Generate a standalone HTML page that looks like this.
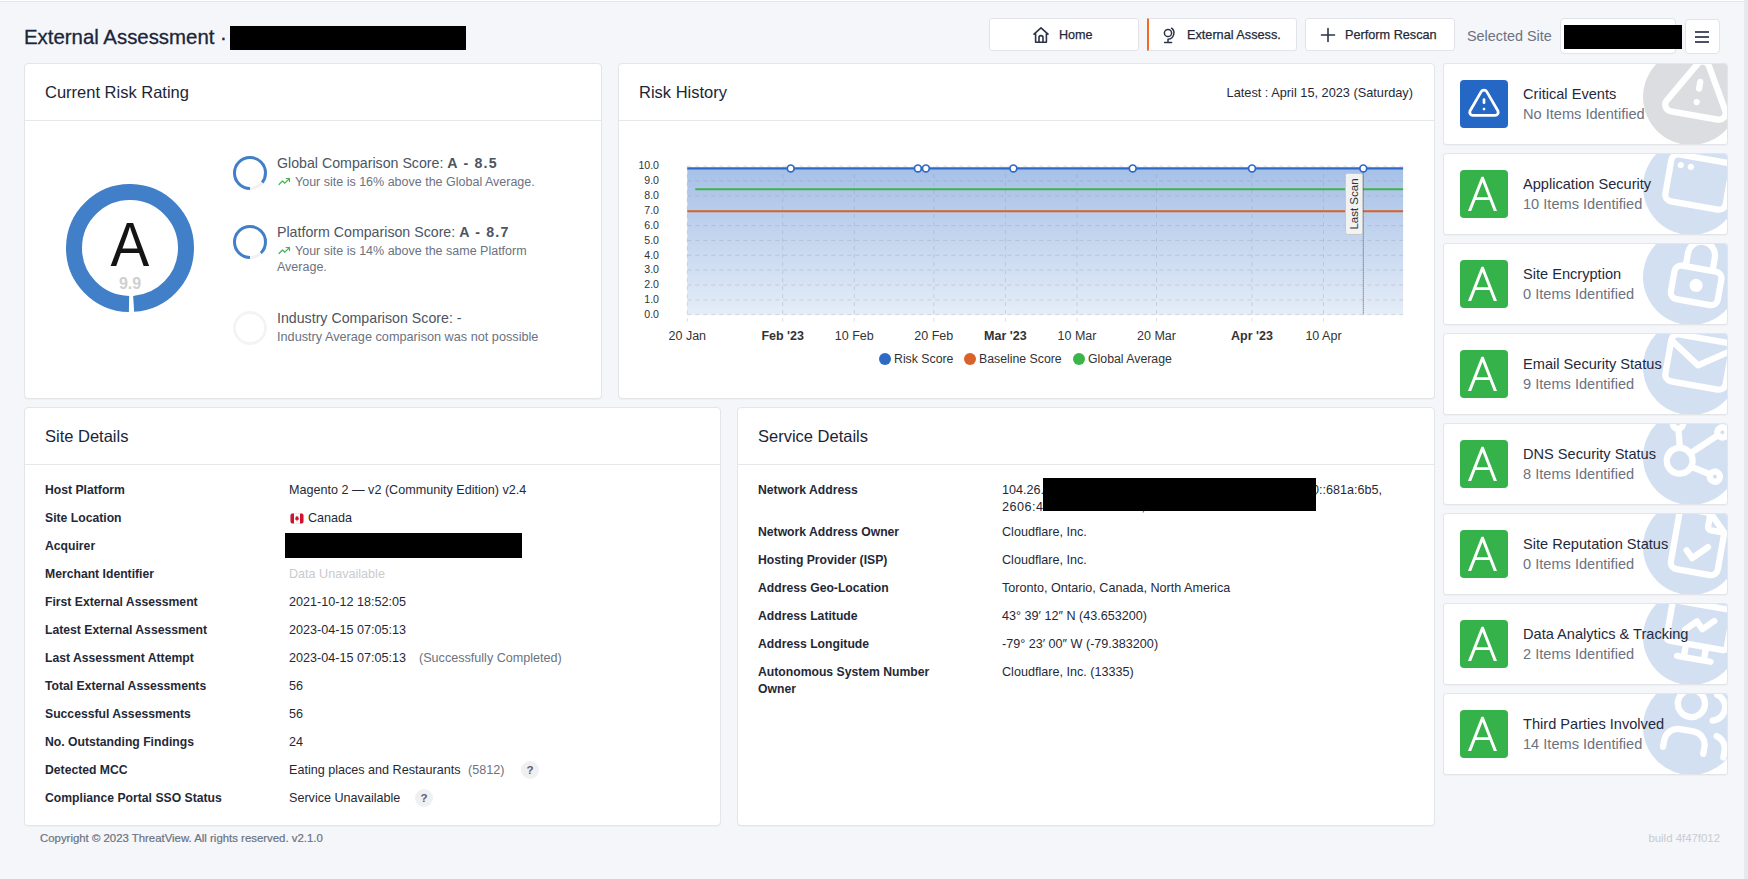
<!DOCTYPE html>
<html><head><meta charset="utf-8">
<style>
*{box-sizing:border-box;margin:0;padding:0}
html,body{width:1748px;height:879px;overflow:hidden}
body{-webkit-font-smoothing:antialiased;font-family:"Liberation Sans",sans-serif;background:#f4f6fa;position:relative;color:#1f2937}
.abs{position:absolute}
.topline{position:absolute;left:0;top:0;width:1744px;height:2px;background:#fff;border-bottom:1px solid #e3e5ea}
.scroll{position:absolute;right:0;top:0;width:4px;height:879px;background:#e8e9ee}
.title{position:absolute;left:24px;top:25px;font-size:20.4px;color:#1b2538;-webkit-text-stroke:0.3px #1b2538;white-space:nowrap;line-height:24px}
.redact{position:absolute;background:#000}
.btn{position:absolute;top:18px;height:33px;background:#fff;border:1px solid #e2e4ea;border-radius:3px;font-size:12.7px;color:#1f2937;white-space:nowrap}
.med{-webkit-text-stroke:0.25px currentColor}
.card{position:absolute;background:#fff;border:1px solid #e4e5e9;border-radius:4px;box-shadow:0 1px 1px rgba(0,0,0,0.03)}
.chead{position:absolute;left:0;top:0;right:0;height:57px;border-bottom:1px solid #e5e7eb}
.chead .t{position:absolute;left:20px;top:19px;font-size:16.5px;color:#1b2538;white-space:nowrap}
.rc{position:absolute;left:1443px;width:285px;height:82px;background:#fff;border:1px solid #e4e5e9;border-radius:3px;overflow:hidden;box-shadow:0 1px 1px rgba(0,0,0,0.03)}
.rc .bg{position:absolute;left:199px;top:-15px;width:96px;height:96px;border-radius:50%;background:#d3e0f2}
.rc svg.ic{position:absolute;left:199px;top:-15px}
.rc .sq{position:absolute;left:16px;top:16px;width:48px;height:48px;border-radius:4px;background:#36b24a}
.rc .t1{position:absolute;left:79px;top:22px;font-size:14.6px;color:#1f2a3c;white-space:nowrap;line-height:17px}
.rc .t2{position:absolute;left:79px;top:42px;font-size:14.6px;color:#6b7280;white-space:nowrap;line-height:17px}
.lb{position:absolute;font-size:12.2px;font-weight:700;color:#1f2937;white-space:nowrap;line-height:17px}
.vl{position:absolute;font-size:12.6px;color:#1f2937;white-space:nowrap;line-height:17px}
.q{position:absolute;width:18px;height:18px;border-radius:50%;background:#eff0f2;color:#5a6070;font-size:11.5px;font-weight:700;text-align:center;line-height:18px}
.small{position:absolute;white-space:nowrap}
</style></head><body>
<div class="topline"></div>
<div class="scroll"></div>
<div class="title">External Assessment ·</div>
<div class="redact" style="left:230px;top:26px;width:236px;height:24px"></div>

<div class="btn" style="left:989px;width:150px"></div>
<div class="btn" style="left:1147px;width:150px;border-left:2px solid #f26b21;border-top-left-radius:0;border-bottom-left-radius:0"></div>
<div class="btn" style="left:1305px;width:150px"></div>
<svg class="abs" style="left:1032px;top:26px" width="18" height="18" viewBox="0 0 18 18" fill="none" stroke="#2b3445" stroke-width="1.6" stroke-linejoin="round" stroke-linecap="round"><path d="M2 8.2 L9 1.8 L16 8.2 M3.6 6.8 V16.2 H14.4 V6.8 M7 16.2 V11.6 A2 2 0 0 1 11 11.6 V16.2"/></svg>
<div class="small med" style="left:1059px;top:28px;font-size:12.6px;color:#1f2937;line-height:14px">Home</div>
<svg class="abs" style="left:1161px;top:26px" width="16" height="18" viewBox="0 0 16 18" fill="none" stroke="#2b3445" stroke-width="1.5" stroke-linecap="round"><circle cx="7" cy="7" r="3.6"/><path d="M10.6 2.2 A6.2 6.2 0 0 1 7.2 13.2 M7 13.2 V16.4 M3.6 16.4 H10.6"/></svg>
<div class="small med" style="left:1187px;top:28px;font-size:12.7px;color:#1f2937;line-height:14px">External Assess.</div>
<svg class="abs" style="left:1320px;top:27px" width="16" height="16" viewBox="0 0 16 16" fill="none" stroke="#2b3445" stroke-width="1.6" stroke-linecap="round"><path d="M8 1.5 V14.5 M1.5 8 H14.5"/></svg>
<div class="small med" style="left:1345px;top:28px;font-size:12.7px;color:#1f2937;line-height:14px">Perform Rescan</div>
<div class="small" style="left:1467px;top:28px;font-size:14.4px;color:#6b7280;line-height:16px">Selected Site</div>
<div class="abs" style="left:1560px;top:18px;width:116px;height:36px;background:#fff;border:1px solid #dfe2e8;border-radius:4px"></div>
<div class="redact" style="left:1564px;top:25px;width:118px;height:24px"></div>
<div class="abs" style="left:1685px;top:19px;width:35px;height:35px;background:#fff;border:1px solid #e2e4ea;border-radius:4px"></div>
<div class="abs" style="left:1695px;top:31px;width:14px;height:2px;background:#4b5262"></div>
<div class="abs" style="left:1695px;top:36px;width:14px;height:2px;background:#4b5262"></div>
<div class="abs" style="left:1695px;top:41px;width:14px;height:2px;background:#4b5262"></div>

<div class="card" style="left:24px;top:63px;width:578px;height:336px"><div class="chead"><div class="t">Current Risk Rating</div></div></div>
<div class="card" style="left:618px;top:63px;width:817px;height:336px"><div class="chead"><div class="t">Risk History</div></div></div>
<div class="card" style="left:24px;top:407px;width:697px;height:419px"><div class="chead"><div class="t">Site Details</div></div></div>
<div class="card" style="left:737px;top:407px;width:698px;height:419px"><div class="chead"><div class="t">Service Details</div></div></div>


<svg class="abs" style="left:66px;top:184px" width="128" height="128" viewBox="0 0 128 128"><circle cx="64" cy="64" r="56" fill="none" stroke="#417fc8" stroke-width="16" stroke-dasharray="346.58 351.86" transform="rotate(91 64 64)"/></svg>
<div class="small" style="left:70px;top:209px;width:120px;text-align:center;font-size:62.5px;line-height:70px;color:#141414;transform:scaleX(0.93)">A</div>
<div class="small" style="left:70px;top:274.5px;width:120px;text-align:center;font-size:16px;line-height:18px;color:#cfcfcf;font-weight:700">9.9</div>
<svg class="abs" style="left:233px;top:156px" width="34" height="34" viewBox="0 0 34 34"><circle cx="17" cy="17" r="15.5" fill="none" stroke="#f1f1f1" stroke-width="3"/><circle cx="17" cy="17" r="15.5" fill="none" stroke="#417fc8" stroke-width="3" stroke-dasharray="82.78 97.39" transform="rotate(90 17 17)"/></svg>
<svg class="abs" style="left:233px;top:225px" width="34" height="34" viewBox="0 0 34 34"><circle cx="17" cy="17" r="15.5" fill="none" stroke="#f1f1f1" stroke-width="3"/><circle cx="17" cy="17" r="15.5" fill="none" stroke="#417fc8" stroke-width="3" stroke-dasharray="84.73 97.39" transform="rotate(90 17 17)"/></svg>
<svg class="abs" style="left:233px;top:311px" width="34" height="34" viewBox="0 0 34 34"><circle cx="17" cy="17" r="15.5" fill="none" stroke="#f4f4f4" stroke-width="3"/></svg>
<div class="small" style="left:277px;top:155px;font-size:14.2px;line-height:17px;color:#4b5563">Global Comparison Score: <b style="letter-spacing:1.2px;color:#4b5563">A - 8.5</b></div>
<svg class="abs" style="left:278px;top:177px" width="13" height="9" viewBox="0 0 13 9" fill="none" stroke="#45b553" stroke-width="1.2" stroke-linecap="round" stroke-linejoin="round"><path d="M1 7.5 L4.5 4 L6.8 6.2 L11.5 1.5 M8.2 1.5 H11.5 V4.6"/></svg>
<div class="small" style="left:295px;top:175px;font-size:12.5px;line-height:15px;color:#6b7280">Your site is 16% above the Global Average.</div>
<div class="small" style="left:277px;top:224px;font-size:14.2px;line-height:17px;color:#4b5563">Platform Comparison Score: <b style="letter-spacing:1.2px;color:#4b5563">A - 8.7</b></div>
<svg class="abs" style="left:278px;top:246px" width="13" height="9" viewBox="0 0 13 9" fill="none" stroke="#45b553" stroke-width="1.2" stroke-linecap="round" stroke-linejoin="round"><path d="M1 7.5 L4.5 4 L6.8 6.2 L11.5 1.5 M8.2 1.5 H11.5 V4.6"/></svg>
<div class="small" style="left:295px;top:244px;font-size:12.5px;line-height:15px;color:#6b7280">Your site is 14% above the same Platform</div>
<div class="small" style="left:277px;top:260px;font-size:12.5px;line-height:15px;color:#6b7280">Average.</div>
<div class="small" style="left:277px;top:310px;font-size:14.2px;line-height:17px;color:#4b5563">Industry Comparison Score: -</div>
<div class="small" style="left:277px;top:330px;font-size:12.7px;line-height:15px;color:#6b7280">Industry Average comparison was not possible</div>
<svg class="abs" style="left:618px;top:63px" width="817" height="335" viewBox="618 63 817 335" font-family="Liberation Sans, sans-serif"><defs><linearGradient id="gf" x1="0" y1="0" x2="0" y2="1"><stop offset="0" stop-color="#a6c0e7"/><stop offset="1" stop-color="#e5edf8"/></linearGradient></defs><rect x="687.3" y="168.3" width="715.8" height="146.4" fill="url(#gf)"/><line x1="687.3" y1="314.7" x2="1403.1" y2="314.7" stroke="#8f98a6" stroke-opacity="0.32" stroke-width="1" stroke-dasharray="4 4"/><text x="659" y="317.9" text-anchor="end" font-size="10.6" fill="#333">0.0</text><line x1="687.3" y1="299.9" x2="1403.1" y2="299.9" stroke="#8f98a6" stroke-opacity="0.32" stroke-width="1" stroke-dasharray="4 4"/><text x="659" y="303.1" text-anchor="end" font-size="10.6" fill="#333">1.0</text><line x1="687.3" y1="285.0" x2="1403.1" y2="285.0" stroke="#8f98a6" stroke-opacity="0.32" stroke-width="1" stroke-dasharray="4 4"/><text x="659" y="288.2" text-anchor="end" font-size="10.6" fill="#333">2.0</text><line x1="687.3" y1="270.1" x2="1403.1" y2="270.1" stroke="#8f98a6" stroke-opacity="0.32" stroke-width="1" stroke-dasharray="4 4"/><text x="659" y="273.3" text-anchor="end" font-size="10.6" fill="#333">3.0</text><line x1="687.3" y1="255.3" x2="1403.1" y2="255.3" stroke="#8f98a6" stroke-opacity="0.32" stroke-width="1" stroke-dasharray="4 4"/><text x="659" y="258.5" text-anchor="end" font-size="10.6" fill="#333">4.0</text><line x1="687.3" y1="240.4" x2="1403.1" y2="240.4" stroke="#8f98a6" stroke-opacity="0.32" stroke-width="1" stroke-dasharray="4 4"/><text x="659" y="243.6" text-anchor="end" font-size="10.6" fill="#333">5.0</text><line x1="687.3" y1="225.6" x2="1403.1" y2="225.6" stroke="#8f98a6" stroke-opacity="0.32" stroke-width="1" stroke-dasharray="4 4"/><text x="659" y="228.8" text-anchor="end" font-size="10.6" fill="#333">6.0</text><line x1="687.3" y1="210.8" x2="1403.1" y2="210.8" stroke="#8f98a6" stroke-opacity="0.32" stroke-width="1" stroke-dasharray="4 4"/><text x="659" y="213.9" text-anchor="end" font-size="10.6" fill="#333">7.0</text><line x1="687.3" y1="195.9" x2="1403.1" y2="195.9" stroke="#8f98a6" stroke-opacity="0.32" stroke-width="1" stroke-dasharray="4 4"/><text x="659" y="199.1" text-anchor="end" font-size="10.6" fill="#333">8.0</text><line x1="687.3" y1="181.0" x2="1403.1" y2="181.0" stroke="#8f98a6" stroke-opacity="0.32" stroke-width="1" stroke-dasharray="4 4"/><text x="659" y="184.2" text-anchor="end" font-size="10.6" fill="#333">9.0</text><line x1="687.3" y1="166.2" x2="1403.1" y2="166.2" stroke="#8f98a6" stroke-opacity="0.32" stroke-width="1" stroke-dasharray="4 4"/><text x="659" y="169.4" text-anchor="end" font-size="10.6" fill="#333">10.0</text><line x1="687.3" y1="166.2" x2="687.3" y2="321.5" stroke="#8f98a6" stroke-opacity="0.32" stroke-width="1" stroke-dasharray="4 4"/><text x="687.3" y="340.3" text-anchor="middle" font-size="12.5" fill="#333">20 Jan</text><line x1="782.7" y1="166.2" x2="782.7" y2="321.5" stroke="#8f98a6" stroke-opacity="0.32" stroke-width="1" stroke-dasharray="4 4"/><text x="782.7" y="340.3" text-anchor="middle" font-size="12.5" fill="#333" font-weight="700">Feb &#39;23</text><line x1="854.3" y1="166.2" x2="854.3" y2="321.5" stroke="#8f98a6" stroke-opacity="0.32" stroke-width="1" stroke-dasharray="4 4"/><text x="854.3" y="340.3" text-anchor="middle" font-size="12.5" fill="#333">10 Feb</text><line x1="933.8" y1="166.2" x2="933.8" y2="321.5" stroke="#8f98a6" stroke-opacity="0.32" stroke-width="1" stroke-dasharray="4 4"/><text x="933.8" y="340.3" text-anchor="middle" font-size="12.5" fill="#333">20 Feb</text><line x1="1005.4" y1="166.2" x2="1005.4" y2="321.5" stroke="#8f98a6" stroke-opacity="0.32" stroke-width="1" stroke-dasharray="4 4"/><text x="1005.4" y="340.3" text-anchor="middle" font-size="12.5" fill="#333" font-weight="700">Mar &#39;23</text><line x1="1077.0" y1="166.2" x2="1077.0" y2="321.5" stroke="#8f98a6" stroke-opacity="0.32" stroke-width="1" stroke-dasharray="4 4"/><text x="1077.0" y="340.3" text-anchor="middle" font-size="12.5" fill="#333">10 Mar</text><line x1="1156.5" y1="166.2" x2="1156.5" y2="321.5" stroke="#8f98a6" stroke-opacity="0.32" stroke-width="1" stroke-dasharray="4 4"/><text x="1156.5" y="340.3" text-anchor="middle" font-size="12.5" fill="#333">20 Mar</text><line x1="1252.0" y1="166.2" x2="1252.0" y2="321.5" stroke="#8f98a6" stroke-opacity="0.32" stroke-width="1" stroke-dasharray="4 4"/><text x="1252.0" y="340.3" text-anchor="middle" font-size="12.5" fill="#333" font-weight="700">Apr &#39;23</text><line x1="1323.5" y1="166.2" x2="1323.5" y2="321.5" stroke="#8f98a6" stroke-opacity="0.32" stroke-width="1" stroke-dasharray="4 4"/><text x="1323.5" y="340.3" text-anchor="middle" font-size="12.5" fill="#333">10 Apr</text><line x1="695.3" y1="189.2" x2="1403.1" y2="189.2" stroke="#3ab54a" stroke-width="2"/><line x1="687.3" y1="211.3" x2="1403.1" y2="211.3" stroke="#d9622b" stroke-width="2"/><line x1="687.3" y1="168.4" x2="1403.1" y2="168.4" stroke="#2d6ac6" stroke-width="2.2"/><line x1="1363.3" y1="168.4" x2="1363.3" y2="314.7" stroke="#555" stroke-width="1" stroke-dasharray="1 1"/><rect x="1345.5" y="173.5" width="17" height="61" rx="2" fill="#f2f2f2" stroke="#c8c8c8" stroke-width="1"/><text transform="translate(1358,204) rotate(-90)" text-anchor="middle" font-size="11.5" fill="#333">Last Scan</text><circle cx="790.7" cy="168.4" r="3.4" fill="#fff" stroke="#2d6ac6" stroke-width="1.7"/><circle cx="917.9" cy="168.4" r="3.4" fill="#fff" stroke="#2d6ac6" stroke-width="1.7"/><circle cx="925.9" cy="168.4" r="3.4" fill="#fff" stroke="#2d6ac6" stroke-width="1.7"/><circle cx="1013.4" cy="168.4" r="3.4" fill="#fff" stroke="#2d6ac6" stroke-width="1.7"/><circle cx="1132.7" cy="168.4" r="3.4" fill="#fff" stroke="#2d6ac6" stroke-width="1.7"/><circle cx="1252.0" cy="168.4" r="3.4" fill="#fff" stroke="#2d6ac6" stroke-width="1.7"/><circle cx="1363.3" cy="168.4" r="3.4" fill="#fff" stroke="#2d6ac6" stroke-width="1.7"/></svg>
<div class="abs" style="left:879px;top:353px;width:12px;height:12px;border-radius:50%;background:#2d6ac6"></div>
<div class="small" style="left:894px;top:352px;font-size:12.3px;line-height:15px;color:#333">Risk Score</div>
<div class="abs" style="left:964px;top:353px;width:12px;height:12px;border-radius:50%;background:#d9622b"></div>
<div class="small" style="left:979px;top:352px;font-size:12.3px;line-height:15px;color:#333">Baseline Score</div>
<div class="abs" style="left:1073px;top:353px;width:12px;height:12px;border-radius:50%;background:#3ab54a"></div>
<div class="small" style="left:1088px;top:352px;font-size:12.3px;line-height:15px;color:#333">Global Average</div>
<div class="small" style="left:1000px;top:85px;width:413px;text-align:right;font-size:12.75px;line-height:15px;color:#1f2937">Latest : April 15, 2023 (Saturday)</div>
<div class="rc" style="top:63px"><div class="bg" style="background:#dcdde1"></div><svg class="ic" width="96" height="96" viewBox="0 0 96 96"><g transform="translate(55.5,43) rotate(10) scale(3.4) translate(-12,-12)" fill="none" stroke="#fff" stroke-width="1.85" stroke-linecap="round" stroke-linejoin="round"><path d="M12 9v2m0 4v.01 M5 19h14a2 2 0 0 0 1.84 -2.75l-7.1 -12.25a2 2 0 0 0 -3.5 0l-7.1 12.25a2 2 0 0 0 1.75 2.75"/></g></svg><div class="sq" style="background:#2567c5"></div><svg class="abs" style="left:16px;top:16px" width="48" height="48" viewBox="0 0 48 48"><g transform="translate(24,24.3) scale(1.58) translate(-12,-12)" fill="none" stroke="#fff" stroke-width="1.75" stroke-linecap="round" stroke-linejoin="round"><path d="M12 9v2m0 4v.01 M5 19h14a2 2 0 0 0 1.84 -2.75l-7.1 -12.25a2 2 0 0 0 -3.5 0l-7.1 12.25a2 2 0 0 0 1.75 2.75"/></g></svg><div class="t1">Critical Events</div><div class="t2">No Items Identified</div></div>
<div class="rc" style="top:153px"><div class="bg" style="background:#d3e0f2"></div><svg class="ic" width="96" height="96" viewBox="0 0 96 96"><g transform="translate(55.5,43) rotate(10) scale(3.4) translate(-12,-12)" fill="none" stroke="#fff" stroke-width="1.85" stroke-linecap="round" stroke-linejoin="round"><path d="M3 7a2 2 0 0 1 2 -2h14a2 2 0 0 1 2 2v10a2 2 0 0 1 -2 2h-14a2 2 0 0 1 -2 -2z M6 8h.01 M9 8h.01"/></g></svg><div class="sq"></div><svg class="abs" style="left:16px;top:16px" width="48" height="48" viewBox="0 0 48 48"><path d="M8 41 L21.4 6.7 L23.6 6.7 L37 41 L33.8 41 L29.5 30 L15.5 30 L11.2 41 Z M16.55 27.3 L28.46 27.3 L22.5 12 Z" fill="#fff" fill-rule="evenodd"/></svg><div class="t1">Application Security</div><div class="t2">10 Items Identified</div></div>
<div class="rc" style="top:243px"><div class="bg" style="background:#d3e0f2"></div><svg class="ic" width="96" height="96" viewBox="0 0 96 96"><g transform="translate(55.5,43) rotate(10) scale(3.4) translate(-12,-12)" fill="none" stroke="#fff" stroke-width="1.85" stroke-linecap="round" stroke-linejoin="round"><path d="M5 13a2 2 0 0 1 2 -2h10a2 2 0 0 1 2 2v6a2 2 0 0 1 -2 2h-10a2 2 0 0 1 -2 -2z M11 16a1 1 0 1 0 2 0a1 1 0 1 0 -2 0 M8 11v-4a4 4 0 1 1 8 0v4"/></g></svg><div class="sq"></div><svg class="abs" style="left:16px;top:16px" width="48" height="48" viewBox="0 0 48 48"><path d="M8 41 L21.4 6.7 L23.6 6.7 L37 41 L33.8 41 L29.5 30 L15.5 30 L11.2 41 Z M16.55 27.3 L28.46 27.3 L22.5 12 Z" fill="#fff" fill-rule="evenodd"/></svg><div class="t1">Site Encryption</div><div class="t2">0 Items Identified</div></div>
<div class="rc" style="top:333px"><div class="bg" style="background:#d3e0f2"></div><svg class="ic" width="96" height="96" viewBox="0 0 96 96"><g transform="translate(55.5,43) rotate(10) scale(3.4) translate(-12,-12)" fill="none" stroke="#fff" stroke-width="1.85" stroke-linecap="round" stroke-linejoin="round"><path d="M3 7a2 2 0 0 1 2 -2h14a2 2 0 0 1 2 2v10a2 2 0 0 1 -2 2h-14a2 2 0 0 1 -2 -2z M3 7l9 6l9 -6"/></g></svg><div class="sq"></div><svg class="abs" style="left:16px;top:16px" width="48" height="48" viewBox="0 0 48 48"><path d="M8 41 L21.4 6.7 L23.6 6.7 L37 41 L33.8 41 L29.5 30 L15.5 30 L11.2 41 Z M16.55 27.3 L28.46 27.3 L22.5 12 Z" fill="#fff" fill-rule="evenodd"/></svg><div class="t1">Email Security Status</div><div class="t2">9 Items Identified</div></div>
<div class="rc" style="top:423px"><div class="bg" style="background:#d3e0f2"></div><svg class="ic" width="96" height="96" viewBox="0 0 96 96"><g transform="translate(55.5,43) rotate(10) scale(3.4) translate(-12,-12)" fill="none" stroke="#fff" stroke-width="1.85" stroke-linecap="round" stroke-linejoin="round"><path d="M3.2 15.5a3.8 3.8 0 1 0 7.6 0a3.8 3.8 0 1 0 -7.6 0 M3.1 4.85a1.5 1.5 0 1 0 3 0a1.5 1.5 0 1 0 -3 0 M16.4 5.1a1.5 1.5 0 1 0 3 0a1.5 1.5 0 1 0 -3 0 M16.5 18.3a1.5 1.5 0 1 0 3 0a1.5 1.5 0 1 0 -3 0 M6.4 11.7 L5 6.4 M9.6 12.9 L16.8 6.1 M10.6 16.6 L16.6 17.9"/></g></svg><div class="sq"></div><svg class="abs" style="left:16px;top:16px" width="48" height="48" viewBox="0 0 48 48"><path d="M8 41 L21.4 6.7 L23.6 6.7 L37 41 L33.8 41 L29.5 30 L15.5 30 L11.2 41 Z M16.55 27.3 L28.46 27.3 L22.5 12 Z" fill="#fff" fill-rule="evenodd"/></svg><div class="t1">DNS Security Status</div><div class="t2">8 Items Identified</div></div>
<div class="rc" style="top:513px"><div class="bg" style="background:#d3e0f2"></div><svg class="ic" width="96" height="96" viewBox="0 0 96 96"><g transform="translate(55.5,43) rotate(10) scale(3.4) translate(-12,-12)" fill="none" stroke="#fff" stroke-width="1.85" stroke-linecap="round" stroke-linejoin="round"><path d="M14 3v4a1 1 0 0 0 1 1h4 M17 21h-10a2 2 0 0 1 -2 -2v-14a2 2 0 0 1 2 -2h7l5 5v11a2 2 0 0 1 -2 2z M9 15l2 2l4 -4"/></g></svg><div class="sq"></div><svg class="abs" style="left:16px;top:16px" width="48" height="48" viewBox="0 0 48 48"><path d="M8 41 L21.4 6.7 L23.6 6.7 L37 41 L33.8 41 L29.5 30 L15.5 30 L11.2 41 Z M16.55 27.3 L28.46 27.3 L22.5 12 Z" fill="#fff" fill-rule="evenodd"/></svg><div class="t1">Site Reputation Status</div><div class="t2">0 Items Identified</div></div>
<div class="rc" style="top:603px"><div class="bg" style="background:#d3e0f2"></div><svg class="ic" width="96" height="96" viewBox="0 0 96 96"><g transform="translate(55.5,43) rotate(10) scale(3.4) translate(-12,-12)" fill="none" stroke="#fff" stroke-width="1.85" stroke-linecap="round" stroke-linejoin="round"><path d="M3 5a1 1 0 0 1 1 -1h16a1 1 0 0 1 1 1v10a1 1 0 0 1 -1 1h-16a1 1 0 0 1 -1 -1z M7 20h10 M9 16v4 M15 16v4 M8 12l3 -3l2 2l3 -3"/></g></svg><div class="sq"></div><svg class="abs" style="left:16px;top:16px" width="48" height="48" viewBox="0 0 48 48"><path d="M8 41 L21.4 6.7 L23.6 6.7 L37 41 L33.8 41 L29.5 30 L15.5 30 L11.2 41 Z M16.55 27.3 L28.46 27.3 L22.5 12 Z" fill="#fff" fill-rule="evenodd"/></svg><div class="t1">Data Analytics &amp; Tracking</div><div class="t2">2 Items Identified</div></div>
<div class="rc" style="top:693px"><div class="bg" style="background:#d3e0f2"></div><svg class="ic" width="96" height="96" viewBox="0 0 96 96"><g transform="translate(55.5,43) rotate(10) scale(3.4) translate(-12,-12)" fill="none" stroke="#fff" stroke-width="1.85" stroke-linecap="round" stroke-linejoin="round"><path d="M5 7a4 4 0 1 0 8 0a4 4 0 1 0 -8 0 M3 21v-2a4 4 0 0 1 4 -4h4a4 4 0 0 1 4 4v2 M16 3.13a4 4 0 0 1 0 7.75 M21 21v-2a4 4 0 0 0 -3 -3.85"/></g></svg><div class="sq"></div><svg class="abs" style="left:16px;top:16px" width="48" height="48" viewBox="0 0 48 48"><path d="M8 41 L21.4 6.7 L23.6 6.7 L37 41 L33.8 41 L29.5 30 L15.5 30 L11.2 41 Z M16.55 27.3 L28.46 27.3 L22.5 12 Z" fill="#fff" fill-rule="evenodd"/></svg><div class="t1">Third Parties Involved</div><div class="t2">14 Items Identified</div></div>
<div class="lb" style="left:45px;top:482px">Host Platform</div>
<div class="vl" style="left:289px;top:482px">Magento 2 — v2 (Community Edition) v2.4</div>
<div class="lb" style="left:45px;top:510px">Site Location</div>
<div class="lb" style="left:45px;top:538px">Acquirer</div>
<div class="lb" style="left:45px;top:566px">Merchant Identifier</div>
<div class="lb" style="left:45px;top:594px">First External Assessment</div>
<div class="vl" style="left:289px;top:594px">2021-10-12 18:52:05</div>
<div class="lb" style="left:45px;top:622px">Latest External Assessment</div>
<div class="vl" style="left:289px;top:622px">2023-04-15 07:05:13</div>
<div class="lb" style="left:45px;top:650px">Last Assessment Attempt</div>
<div class="lb" style="left:45px;top:678px">Total External Assessments</div>
<div class="vl" style="left:289px;top:678px">56</div>
<div class="lb" style="left:45px;top:706px">Successful Assessments</div>
<div class="vl" style="left:289px;top:706px">56</div>
<div class="lb" style="left:45px;top:734px">No. Outstanding Findings</div>
<div class="vl" style="left:289px;top:734px">24</div>
<div class="lb" style="left:45px;top:762px">Detected MCC</div>
<div class="lb" style="left:45px;top:790px">Compliance Portal SSO Status</div>
<svg class="abs" style="left:290px;top:513px" width="14" height="11" viewBox="0 0 14 11"><rect x="0.5" y="0.5" width="13" height="10" rx="2" fill="#fff" stroke="#e3e3e3" stroke-width="0.6"/><path d="M2.5 0.5 H4 V10.5 H2.5 A2 2 0 0 1 0.5 8.5 V2.5 A2 2 0 0 1 2.5 0.5 Z M10 0.5 H11.5 A2 2 0 0 1 13.5 2.5 V8.5 A2 2 0 0 1 11.5 10.5 H10 Z" fill="#d0122f"/><path d="M7 2.6 L7.6 3.8 L8.4 3.5 L8.1 5 L9 4.6 L8.6 5.8 L9.3 6.2 L7.4 6.9 V8.2 H6.6 V6.9 L4.7 6.2 L5.4 5.8 L5 4.6 L5.9 5 L5.6 3.5 L6.4 3.8 Z" fill="#d0122f"/></svg>
<div class="vl" style="left:308px;top:510px">Canada</div>
<div class="redact" style="left:285px;top:533px;width:237px;height:25px"></div>
<div class="vl" style="left:289px;top:566px;color:#c9cbcf">Data Unavailable</div>
<div class="vl" style="left:289px;top:650px">2023-04-15 07:05:13</div>
<div class="vl" style="left:419px;top:650px;color:#6b7280">(Successfully Completed)</div>
<div class="vl" style="left:289px;top:762px">Eating places and Restaurants</div>
<div class="vl" style="left:468px;top:762px;color:#6b7280">(5812)</div>
<div class="q" style="left:521px;top:761px">?</div>
<div class="vl" style="left:289px;top:790px">Service Unavailable</div>
<div class="q" style="left:415px;top:789px">?</div>
<div class="lb" style="left:758px;top:482px">Network Address</div>
<div class="lb" style="left:758px;top:524px">Network Address Owner</div>
<div class="lb" style="left:758px;top:552px">Hosting Provider (ISP)</div>
<div class="lb" style="left:758px;top:580px">Address Geo-Location</div>
<div class="lb" style="left:758px;top:608px">Address Latitude</div>
<div class="lb" style="left:758px;top:636px">Address Longitude</div>
<div class="lb" style="left:758px;top:664px">Autonomous System Number</div>
<div class="lb" style="left:758px;top:681px">Owner</div>
<div class="vl" style="left:1002px;top:482px">104.26.10.229, 172.67.71.145, 2606:4700:20::681a:6b5,</div>
<div class="vl" style="left:1002px;top:499px"><span style="letter-spacing:0.5px">2606:4</span>700:20::681a:ae5, 2606:4700:20::ac43:4791</div>
<div class="vl" style="left:1182px;top:482px;width:200px;text-align:right">0::681a:6b5,</div>
<div class="redact" style="left:1043px;top:478px;width:273px;height:33px"></div>
<div class="vl" style="left:1002px;top:524px">Cloudflare, Inc.</div>
<div class="vl" style="left:1002px;top:552px">Cloudflare, Inc.</div>
<div class="vl" style="left:1002px;top:580px">Toronto, Ontario, Canada, North America</div>
<div class="vl" style="left:1002px;top:608px">43° 39′ 12″ N (43.653200)</div>
<div class="vl" style="left:1002px;top:636px">-79° 23′ 00″ W (-79.383200)</div>
<div class="vl" style="left:1002px;top:664px">Cloudflare, Inc. (13335)</div>
<div class="small" style="left:40px;top:831px;font-size:11.4px;line-height:14px;color:#6b7280;-webkit-text-stroke:0.2px #6b7280">Copyright © 2023 ThreatView. All rights reserved. v2.1.0</div>
<div class="small" style="left:1520px;top:831px;width:200px;text-align:right;font-size:11.4px;line-height:14px;color:#c9cbcf">build 4f47f012</div>
</body></html>
